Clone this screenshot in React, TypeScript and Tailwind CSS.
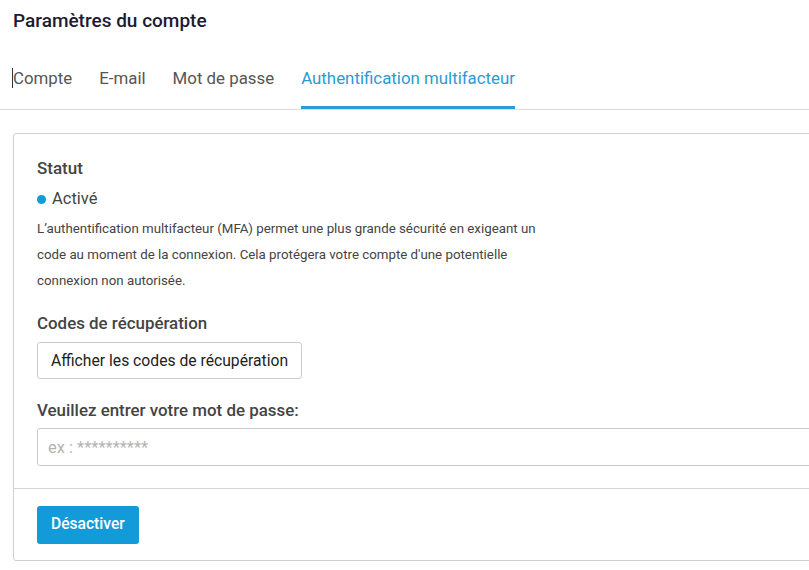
export default function App() {
  const tabs = ["Compte", "E-mail", "Mot de passe", "Authentification multifacteur"];
  const active = 3;

  return (
    <div className="min-h-[570px] w-[809px] overflow-hidden bg-white font-['Roboto',sans-serif]">
      {/* Header */}
      <h1 className="px-[13px] pt-[10px] text-[19px] leading-[22px] font-medium text-[#1d1b33]">
        Paramètres du compte
      </h1>

      {/* Tabs */}
      <div className="mt-[34px] flex border-b border-[#dcdcdc] pl-[13px]">
        {tabs.map((t, i) => (
          <div
            key={t}
            className={
              i === active
                ? "mr-[27px] border-b-[3px] border-[#2b9bd3] pb-[18px] pt-[2px] text-[16.85px] leading-[20px] text-[#2b9bd3]"
                : "mr-[27px] flex items-center pb-[21px] pt-[2px] text-[16.85px] leading-[20px] text-[#555555]"
            }
          >
            {i === 0 && <span className="-ml-px h-[20px] w-px bg-[#333]" />}
            {t}
          </div>
        ))}
      </div>

      {/* Card */}
      <div className="ml-[13px] mt-[23px] w-[830px] rounded-[3px] border border-[#cfcfcf]">
        <div className="px-[23px] pb-[22px] pt-[24px]">
          <h2 className="text-[17px] leading-[20px] font-medium text-[#444444]">Statut</h2>
          <div className="mt-[11px] flex items-center gap-[6px] text-[16.5px] leading-[20px] text-[#444444]">
            <span className="h-[9px] w-[9px] rounded-full bg-[#139bd9]" />
            Activé
          </div>
          <p className="mt-[7px] w-[515px] text-[13.3px] leading-[26px] text-[#444444]">
            L’authentification multifacteur (MFA) permet une plus grande sécurité en exigeant un code au
            moment de la connexion. Cela protégera votre compte d'une potentielle connexion non autorisée.
          </p>

          <h2 className="mt-[19px] text-[16.9px] leading-[20px] font-medium text-[#444444]">
            Codes de récupération
          </h2>
          <button className="mt-[9px] h-[37px] rounded-[3px] border border-[#cccccc] bg-white px-[13px] text-[15.7px] text-[#222222]">
            Afficher les codes de récupération
          </button>

          <h2 className="mt-[21px] text-[16.9px] leading-[20px] font-medium text-[#444444]">
            Veuillez entrer votre mot de passe:
          </h2>
          <input
            type="password"
            placeholder="ex : **********"
            className="mt-[8px] h-[38px] w-full rounded-[3px] border border-[#cccccc] px-[10px] text-[16.5px] outline-none placeholder:text-[#b3b3b3]"
          />
        </div>

        <div className="border-t border-[#d6d6d6] px-[23px] pb-[16px] pt-[17px]">
          <button className="h-[38px] rounded-[3px] bg-[#139bd9] px-[14px] text-[15.6px] font-medium text-white">
            Désactiver
          </button>
        </div>
      </div>
    </div>
  );
}
